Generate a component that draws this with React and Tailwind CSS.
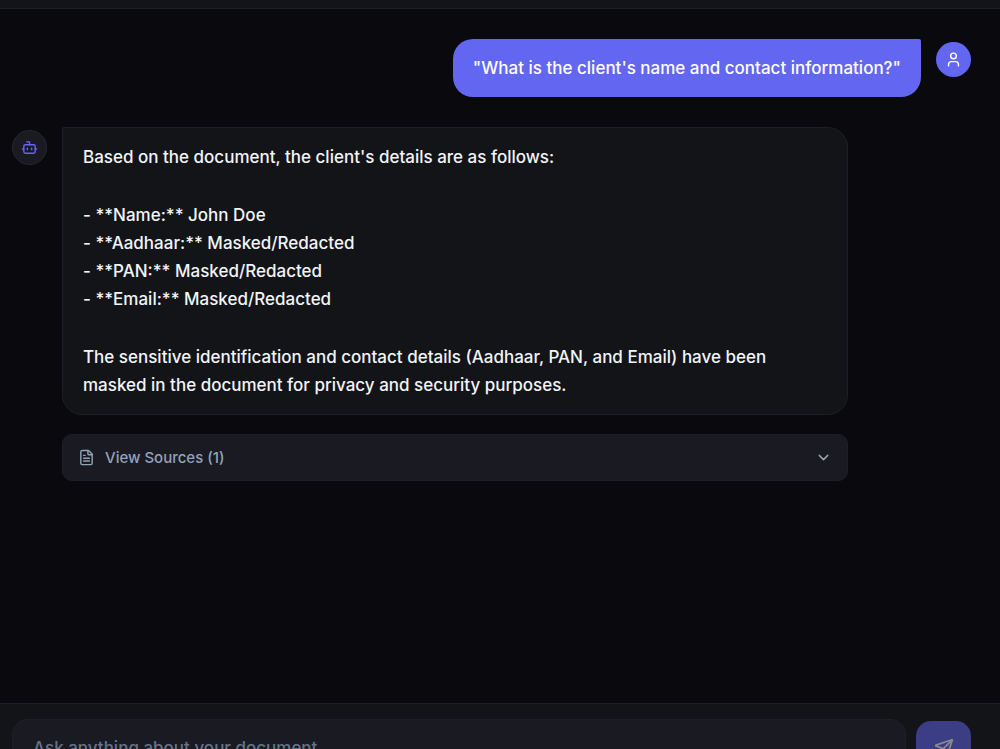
import { useState } from "react";
import { Bot, ChevronDown, FileText, Send, User } from "lucide-react";

const answer = {
	intro: "Based on the document, the client's details are as follows:",
	details: [
		"- **Name:** John Doe",
		"- **Aadhaar:** Masked/Redacted",
		"- **PAN:** Masked/Redacted",
		"- **Email:** Masked/Redacted",
	],
	outro:
		"The sensitive identification and contact details (Aadhaar, PAN, and Email) have been masked in the document for privacy and security purposes.",
};

// UserMessage Component
const UserMessage = ({ text }) => (
	<div className="flex justify-end gap-[15px]">
		<div className="rounded-[20px] rounded-tr-[2px] bg-[#6366f1] px-5 py-[15px] text-white">
			{text}
		</div>
		<div className="mt-[3px] flex size-[35px] shrink-0 items-center justify-center rounded-full bg-[#6366f1] text-white">
			<User size={17} />
		</div>
	</div>
);

// BotMessage Component
const BotMessage = ({ message }) => (
	<div className="flex gap-[15px]">
		<div className="mt-[3px] flex size-[35px] shrink-0 items-center justify-center rounded-full border border-[#27272f] bg-[#1a1a23] text-[#6366f1]">
			<Bot size={17} />
		</div>
		<div className="flex w-[82%] flex-col gap-[19px]">
			<div className="flex flex-col gap-[30px] rounded-[20px] rounded-tl-[2px] border border-[#1e1e2a] bg-[#131418] px-5 py-[15px] text-[#f1f5f9]">
				<p>{message.intro}</p>
				<div>
					{message.details.map((line) => (
						<p key={line}>{line}</p>
					))}
				</div>
				<p>{message.outro}</p>
			</div>
			<button
				type="button"
				className="flex h-[47px] items-center gap-[10px] rounded-[10px] border border-[#1e1e2a] bg-[#1a1a23] px-[15px] text-[15px] font-medium text-[#94a3b8]"
			>
				<FileText size={17} />
				<span>View Sources (1)</span>
				<ChevronDown size={17} className="ml-auto" />
			</button>
		</div>
	</div>
);

export default function App() {
	const [question, setQuestion] = useState("");

	return (
		<div className="flex h-screen flex-col overflow-hidden bg-[#0a0a0e] font-['Inter',sans-serif] text-[17px] leading-[28px] font-medium">
			<header className="h-[9px] shrink-0 border-b border-[#1e1e2a] bg-[#131418]" />

			<main className="flex min-h-0 flex-1 flex-col gap-[30px] pt-[30px] pr-[29px] pl-3">
				<UserMessage text={`"What is the client's name and contact information?"`} />
				<BotMessage message={answer} />
			</main>

			<footer className="h-[46px] shrink-0 border-t border-[#1e1e2a] bg-[#131418] pt-[15px] pr-[29px] pl-3">
				<form
					className="flex items-center gap-[10px]"
					onSubmit={(e) => e.preventDefault()}
				>
					<input
						type="text"
						aria-label="Ask anything about your document"
						placeholder="Ask anything about your document..."
						value={question}
						onChange={(e) => setQuestion(e.target.value)}
						className="h-[58px] min-w-0 flex-1 rounded-[15px] border border-[#1e1e2a] bg-[#1a1a23] px-5 text-white placeholder:text-[#64748b]"
					/>
					<button
						type="submit"
						aria-label="Send"
						disabled={!question}
						className="flex size-[55px] shrink-0 items-center justify-center rounded-[15px] bg-[#6366f1] text-white disabled:opacity-50"
					>
						<Send size={20} />
					</button>
				</form>
			</footer>
		</div>
	);
}
